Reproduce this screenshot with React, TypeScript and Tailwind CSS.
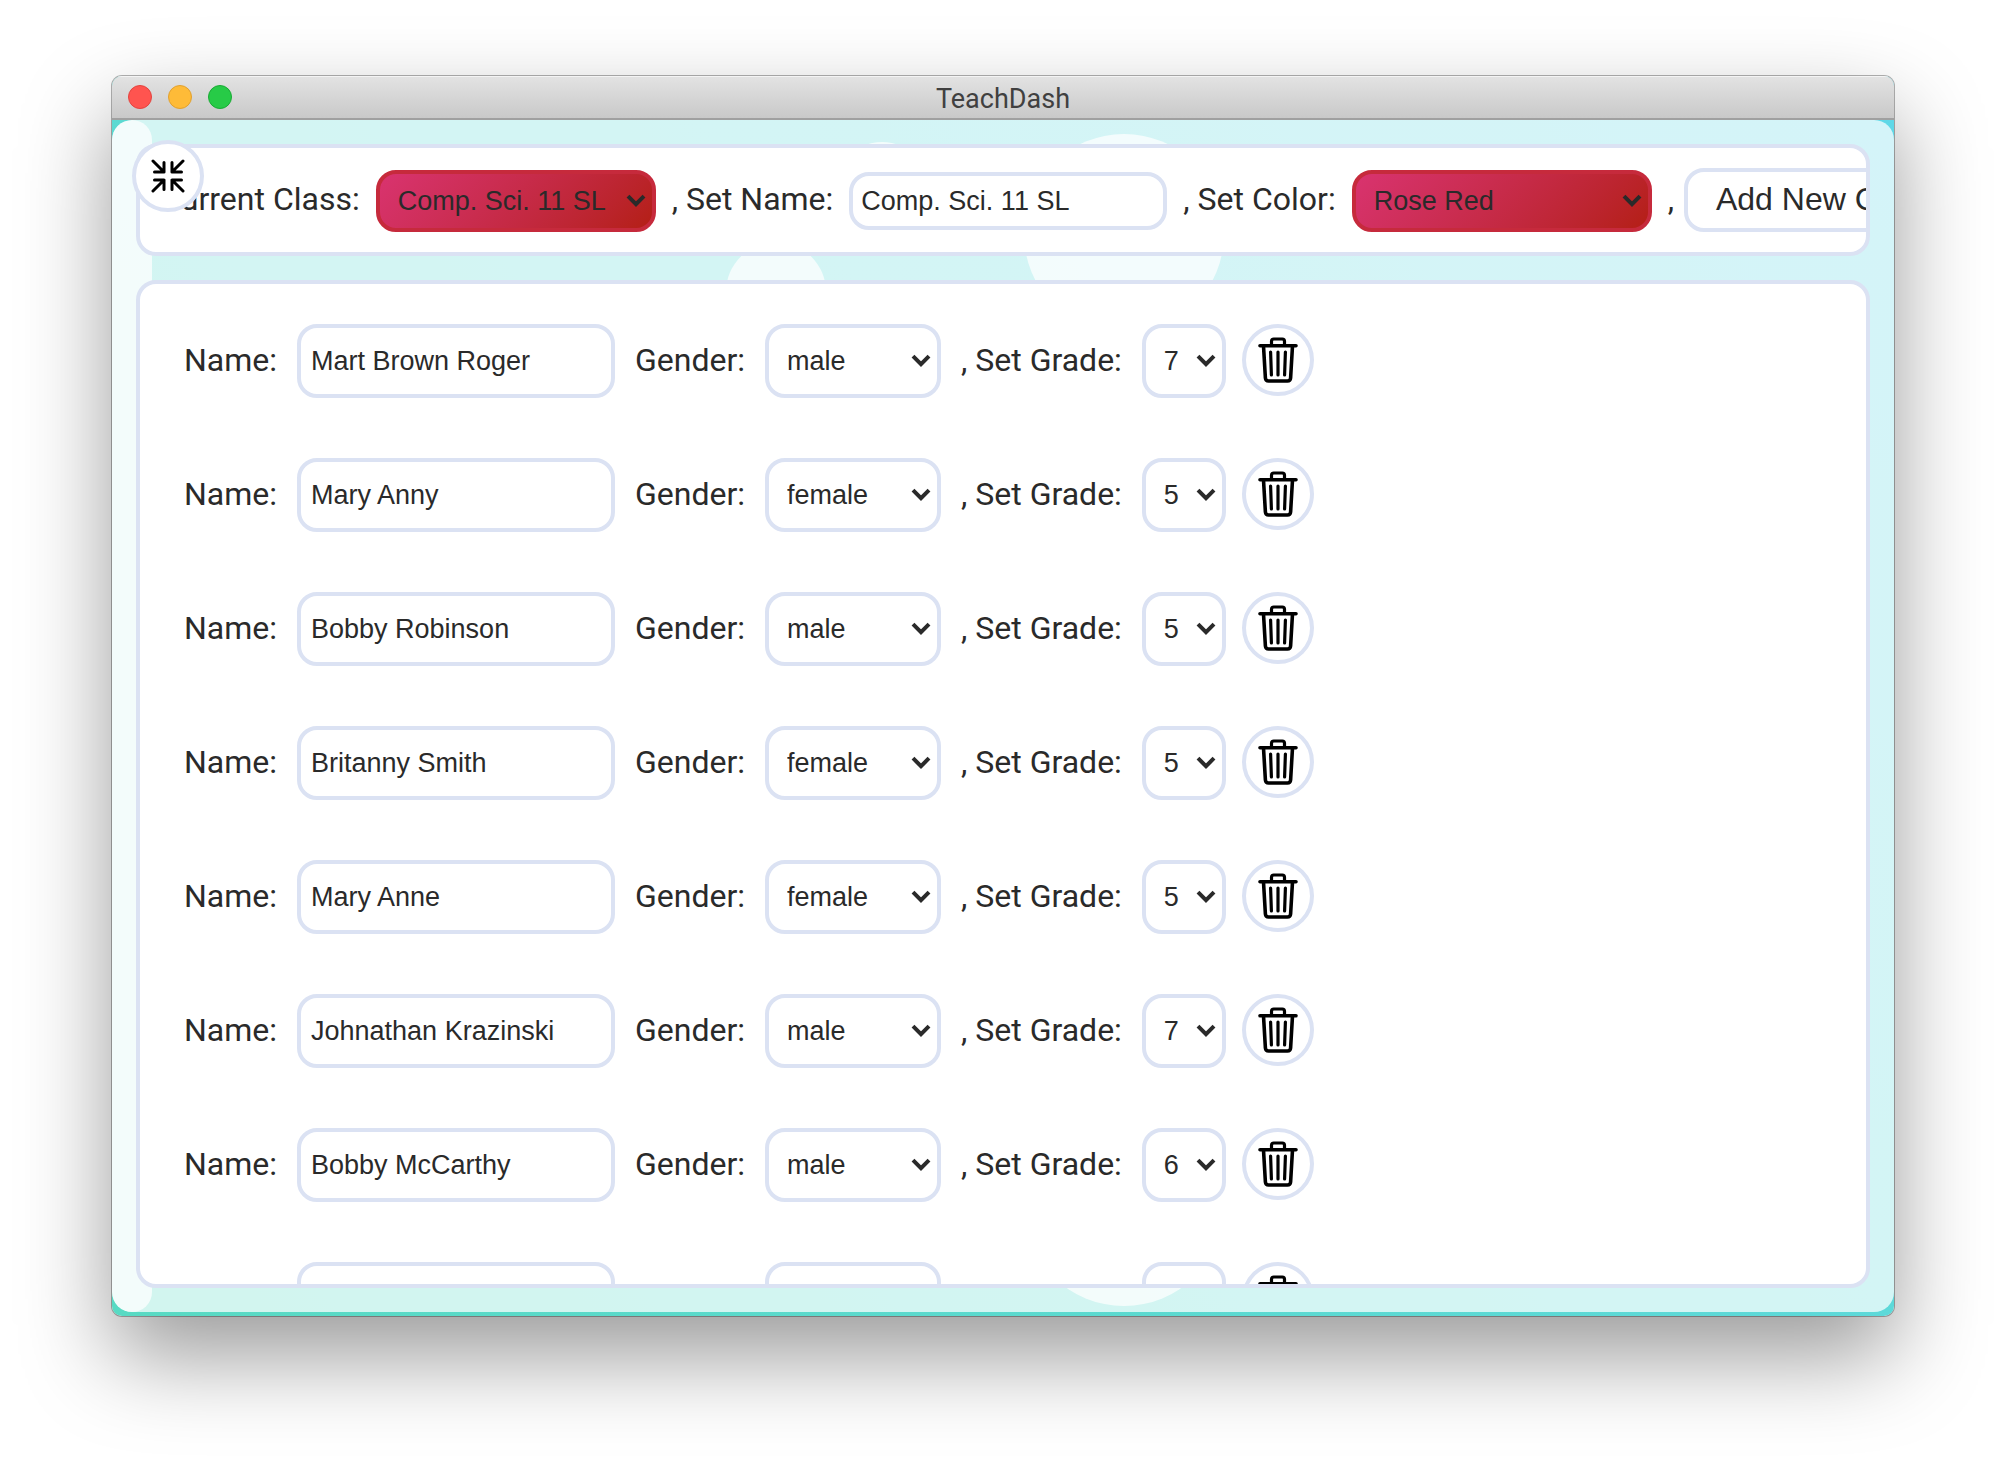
import React from "react";

type Student = { name: string; gender: "male" | "female"; grade: number };

const students: Student[] = [
  { name: "Mart Brown Roger", gender: "male", grade: 7 },
  { name: "Mary Anny", gender: "female", grade: 5 },
  { name: "Bobby Robinson", gender: "male", grade: 5 },
  { name: "Britanny Smith", gender: "female", grade: 5 },
  { name: "Mary Anne", gender: "female", grade: 5 },
  { name: "Johnathan Krazinski", gender: "male", grade: 7 },
  { name: "Bobby McCarthy", gender: "male", grade: 6 },
  { name: "", gender: "male", grade: 5 },
];

const controlFont = 'font-["Liberation_Sans",Arial,sans-serif] text-[27px] text-[#2a2a2a]';

function Chevron() {
  return (
    <svg
      viewBox="0 0 20 14"
      className="pointer-events-none absolute top-1/2 right-[10px] h-[14px] w-5 -translate-y-1/2"
      fill="none"
      stroke="#2a2a2a"
      strokeWidth="4"
      aria-hidden="true"
    >
      <path d="M2 2.2 L10 10.2 L18 2.2" />
    </svg>
  );
}

function Select({
  id,
  value,
  options,
  className,
}: {
  id: string;
  value: string;
  options: string[];
  className: string;
}) {
  return (
    <div className="relative shrink-0">
      <select
        id={id}
        defaultValue={value}
        className={`block appearance-none rounded-[20px] border-4 pl-[18px] outline-none ${controlFont} ${className}`}
      >
        {options.map((o) => (
          <option key={o}>{o}</option>
        ))}
      </select>
      <Chevron />
    </div>
  );
}

function CollapseIcon() {
  return (
    <svg viewBox="0 0 34 34" className="size-[34px]" fill="none" stroke="#000" strokeWidth="3" strokeLinecap="round" strokeLinejoin="round" aria-hidden="true">
      <path d="M2 2 L13 13 M13 3.5 V13 H3.5" />
      <path d="M32 2 L21 13 M21 3.5 V13 H30.5" />
      <path d="M2 32 L13 21 M13 30.5 V21 H3.5" />
      <path d="M32 32 L21 21 M21 30.5 V21 H30.5" />
    </svg>
  );
}

function TrashIcon() {
  return (
    <svg viewBox="0 0 40 46" className="h-[46px] w-10" fill="none" stroke="#000" strokeLinecap="round" strokeLinejoin="round" aria-hidden="true">
      <path strokeWidth="3.6" d="M2 8.8 H38" />
      <path strokeWidth="3.2" d="M13.5 8 V4.2 Q13.5 2 15.7 2 H24.3 Q26.5 2 26.5 4.2 V8" />
      <path strokeWidth="3.6" d="M5.5 9 L7.4 41 Q7.6 44 10.6 44 H29.4 Q32.4 44 32.6 41 L34.5 9" />
      <path strokeWidth="3.2" d="M12.6 15 L13.4 38 M20 15 V38 M27.4 15 L26.6 38" />
    </svg>
  );
}

function StudentRow({ student, index }: { student: Student; index: number }) {
  const border = "border-[#dbe2f3] bg-white";
  return (
    <li className="flex h-[74px] items-center">
      <label htmlFor={`name-${index}`} className="mr-5 pb-0.5">
        Name:
      </label>
      <input
        id={`name-${index}`}
        type="text"
        defaultValue={student.name}
        className={`h-[74px] w-[318px] rounded-[20px] border-4 px-[10px] outline-none ${border} ${controlFont}`}
      />
      <label htmlFor={`gender-${index}`} className="mr-5 ml-5 pb-0.5">
        Gender:
      </label>
      <Select id={`gender-${index}`} value={student.gender} options={["male", "female"]} className={`h-[74px] w-44 ${border}`} />
      <label htmlFor={`grade-${index}`} className="mr-5 ml-5 pb-0.5">
        , Set Grade:
      </label>
      <Select id={`grade-${index}`} value={String(student.grade)} options={["5", "6", "7"]} className={`h-[74px] w-[84px] ${border}`} />
      <button
        type="button"
        aria-label="Delete student"
        className={`ml-4 flex size-[72px] shrink-0 items-center justify-center self-start rounded-full border-4 ${border}`}
      >
        <TrashIcon />
      </button>
    </li>
  );
}

export default function App() {
  const rose = "h-[62px] border-[#c62a3c] bg-linear-135 from-[#d9336f] to-[#b41f14]";
  return (
    <div className="flex h-screen flex-col bg-white px-28 pt-[76px] pb-[148px] font-[Roboto,sans-serif] text-[32px] leading-10 text-[#2a2a2a]">
      <div className="flex min-h-0 flex-1 flex-col overflow-hidden rounded-[10px] bg-linear-45 from-[#58dac3] to-[#60d8e8] shadow-[0_0_0_1px_rgba(0,0,0,0.3),0_40px_90px_rgba(0,0,0,0.4)]">
        <header className="relative flex h-11 shrink-0 items-center justify-center border-b-2 border-[#a0a0a0] bg-linear-to-b from-[#e3e3e3] to-[#c9c9c9] shadow-[inset_0_1px_0_#f4f4f4]">
          <div className="absolute left-4 flex gap-4">
            <button type="button" aria-label="Close" className="size-6 rounded-full border border-[#e2443f] bg-[#ff544f]" />
            <button type="button" aria-label="Minimize" className="size-6 rounded-full border border-[#e0a030] bg-[#febb38]" />
            <button type="button" aria-label="Zoom" className="size-6 rounded-full border border-[#1aaa35] bg-[#27cb47]" />
          </div>
          <h1 className="pt-[3px] text-[27px] leading-8 text-[#404040]">TeachDash</h1>
        </header>

        <main className="relative mb-1 flex min-h-0 flex-1 flex-col gap-6 overflow-hidden rounded-[20px] bg-white/73 p-6">
          <div className="absolute inset-y-0 left-0 w-10 rounded-[20px] bg-white/73" />
          <div className="absolute top-[14px] left-[912px] size-[200px] rounded-full bg-white/73" />
          <div className="absolute top-[122px] left-[614px] size-[100px] rounded-full bg-white/73" />
          <div className="absolute top-[22px] left-[720px] size-[100px] rounded-full bg-white/73" />
          <div className="absolute bottom-[6px] left-[912px] size-[200px] rounded-full bg-white/73" />

          <button
            type="button"
            aria-label="Collapse"
            className="absolute top-5 left-5 z-10 flex size-[72px] items-center justify-center rounded-full border-4 border-[#dbe2f3] bg-white"
          >
            <CollapseIcon />
          </button>

          <section className="relative flex h-28 shrink-0 items-center overflow-hidden rounded-[20px] border-4 border-[#dbe2f3] bg-white pt-0.5 pl-5 whitespace-pre">
            <label htmlFor="class" className="mr-4 pb-1">
              Current Class:
            </label>
            <Select id="class" value="Comp. Sci. 11 SL" options={["Comp. Sci. 11 SL"]} className={`w-[280px] ${rose}`} />
            <label htmlFor="set-name" className="mr-4 ml-4 pb-1">
              , Set Name:
            </label>
            <input
              id="set-name"
              type="text"
              defaultValue="Comp. Sci. 11 SL"
              className={`h-[58px] w-[318px] shrink-0 rounded-[20px] border-4 border-[#dbe2f3] bg-white px-2 outline-none ${controlFont}`}
            />
            <label htmlFor="set-color" className="mr-4 ml-4 pb-1">
              , Set Color:
            </label>
            <Select id="set-color" value="Rose Red" options={["Rose Red"]} className={`w-[300px] ${rose}`} />
            <span className="mr-[10px] ml-4 pb-1">,</span>
            <button
              type="button"
              className='mb-0.5 h-16 shrink-0 rounded-[20px] border-4 border-[#dbe2f3] bg-white px-7 pb-0.5 font-["Liberation_Sans",Arial,sans-serif]'
            >
              Add New Class
            </button>
          </section>

          <section className="relative min-h-0 flex-1 overflow-hidden rounded-[20px] border-4 border-[#dbe2f3] bg-white">
            <ul className="flex flex-col gap-[60px] pt-10 pl-11">
              {students.map((s, i) => (
                <StudentRow key={i} student={s} index={i} />
              ))}
            </ul>
          </section>
        </main>
      </div>
    </div>
  );
}
